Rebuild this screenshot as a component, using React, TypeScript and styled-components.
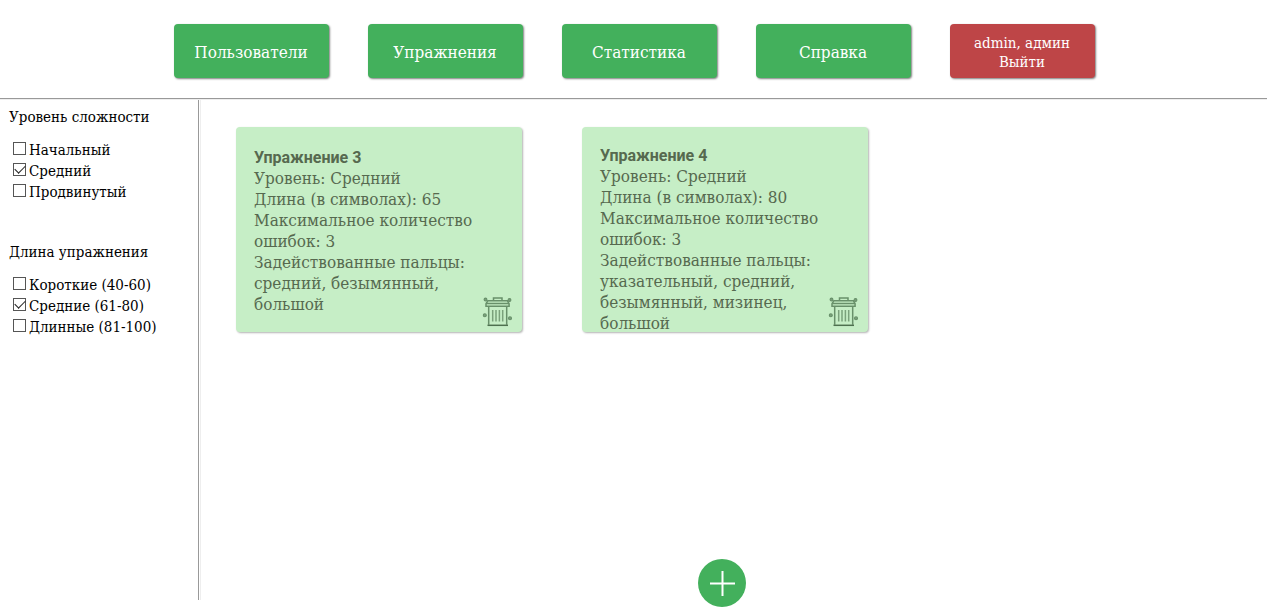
import React, { useState } from "react";
import styled, { createGlobalStyle } from "styled-components";

const slab = '"Roboto Slab", "DejaVu Serif Condensed", "DejaVu Serif", serif';

const GlobalStyle = createGlobalStyle`
  * { box-sizing: border-box; }
  body {
    margin: 0;
    background: #fff;
    color: #000;
    font-family: ${slab};
    font-size: 15px;
    line-height: 21px;
  }
`;

const Header = styled.header`
  padding: 24px 0 20px;
  border-bottom: 1px solid #999;
  box-shadow: 0 1px #eee;
`;

const Nav = styled.nav`
  display: flex;
  justify-content: center;
  gap: 39px;
  padding-left: 1px;
`;

const NavButton = styled.button<{ $exit?: boolean }>`
  width: ${(p) => (p.$exit ? 145 : 155)}px;
  height: 54px;
  padding: ${(p) => (p.$exit ? 4 : 2)}px 0 0;
  border: 0;
  border-radius: 4px;
  background: ${(p) => (p.$exit ? "#be4547" : "#43b05c")};
  box-shadow: 1px 1px 2px rgba(0, 0, 0, 0.5);
  color: #fff;
  font-family: inherit;
  font-size: ${(p) => (p.$exit ? 15 : 17)}px;
  line-height: 19px;
  cursor: pointer;
`;

const Line = styled.span`
  display: block;
`;

const Body = styled.div`
  display: flex;
  align-items: flex-start;
`;

const Sidebar = styled.aside`
  flex: 0 0 201px;
  height: calc(100vh - 114px);
  margin-top: 1px;
  padding: 7px 9px;
  border-right: 1px solid #eee;
  box-shadow: inset -1px 0 #fff, inset -2px 0 #999;
`;

const FilterGroup = styled.fieldset`
  margin: 0 0 39px;
  padding: 0;
  border: 0;
`;

const FilterTitle = styled.legend`
  margin-bottom: 12px;
  padding: 0;
`;

const Option = styled.label`
  display: flex;
  gap: 3px;
  padding-left: 4px;
`;

const Box = styled.input`
  appearance: none;
  width: 13px;
  height: 13px;
  margin: 2px 0 0;
  border: 1px solid #555;
  background: #fff;
  display: grid;
  &:checked::after {
    content: "";
    width: 9px;
    height: 5px;
    margin: 2px 1px;
    border: solid #222;
    border-width: 0 0 1px 1px;
    transform: translateY(-1px) rotate(-45deg);
  }
`;

const Main = styled.main`
  flex: 1;
  display: flex;
  flex-wrap: wrap;
  gap: 28px 60px;
  padding: 28px 35px;
`;

const Card = styled.article`
  position: relative;
  display: grid;
  align-content: safe center;
  width: 286px;
  height: 205px;
  padding: 18px 17px 16px 18px;
  border-radius: 4px;
  background: #c6eec6;
  box-shadow: 1px 1px 2px rgba(0, 0, 0, 0.3);
  color: #56694f;
  font-size: 17px;
`;

const CardTitle = styled.h2`
  margin: 0;
  font: bold 16px/21px Roboto, sans-serif;
`;

const CardText = styled.p`
  margin: 0;
`;

const DeleteButton = styled.button`
  position: absolute;
  right: 9px;
  bottom: 4px;
  width: 32px;
  height: 32px;
  padding: 0;
  border: 0;
  background: none;
  cursor: pointer;
`;

const AddButton = styled.button`
  position: fixed;
  left: 57%;
  bottom: 7px;
  width: 48px;
  height: 48px;
  margin-left: -24px;
  padding: 0;
  border: 0;
  border-radius: 50%;
  background: #43b05c;
  cursor: pointer;
`;

function TrashIcon() {
  return (
    <svg width="32" height="32" viewBox="0 0 32 32" fill="none" stroke="#68906a" strokeWidth="1.5">
      <path d="M12.5 4.8V2h8.5v2.8M6.8 4.8h19.7l1.6 3v2.4H5V7.8z" />
      <path d="M5 7.6h23M7.7 10.2v18.6M25.7 10.2v18.6" />
      <path d="M11.7 14v11.5M15 14v11.5M18.4 14v11.5M21.7 14v11.5" strokeWidth="1.5" stroke="#7aa17b" />
      <path d="M6.5 29.3h20.5" stroke="#4e704f" />
      <g fill="#7aa17b" strokeWidth="1.1">
        <circle cx="4.5" cy="3.5" r="1.4" />
        <circle cx="28.5" cy="4" r="1.4" />
        <circle cx="3.8" cy="19.2" r="1.5" />
        <circle cx="29" cy="22.2" r="1.5" />
      </g>
    </svg>
  );
}

const navItems = ["Пользователи", "Упражнения", "Статистика", "Справка"];

const filters = [
  { title: "Уровень сложности", options: ["Начальный", "Средний", "Продвинутый"] },
  { title: "Длина упражнения", options: ["Короткие (40-60)", "Средние (61-80)", "Длинные (81-100)"] },
];

const exercises = [
  { id: 3, level: "Средний", length: 65, errors: 3, fingers: "средний, безымянный, большой" },
  { id: 4, level: "Средний", length: 80, errors: 3, fingers: "указательный, средний, безымянный, мизинец, большой" },
];

export default function App() {
  const [checked, setChecked] = useState<string[]>(["Средний", "Средние (61-80)"]);
  const toggle = (name: string) =>
    setChecked((c) => (c.includes(name) ? c.filter((n) => n !== name) : [...c, name]));

  return (
    <>
      <GlobalStyle />
      <Header>
        <Nav>
          {navItems.map((item) => (
            <NavButton key={item}>{item}</NavButton>
          ))}
          <NavButton $exit>
            <Line>admin, админ</Line>
            <Line>Выйти</Line>
          </NavButton>
        </Nav>
      </Header>
      <Body>
        <Sidebar>
          {filters.map((group) => (
            <FilterGroup key={group.title}>
              <FilterTitle>{group.title}</FilterTitle>
              {group.options.map((name) => (
                <Option key={name}>
                  <Box type="checkbox" checked={checked.includes(name)} onChange={() => toggle(name)} />
                  {name}
                </Option>
              ))}
            </FilterGroup>
          ))}
        </Sidebar>
        <Main>
          {exercises.map((e) => (
            <Card key={e.id}>
              <CardTitle>{`Упражнение ${e.id}`}</CardTitle>
              <CardText>{`Уровень: ${e.level}`}</CardText>
              <CardText>{`Длина (в символах): ${e.length}`}</CardText>
              <CardText>{`Максимальное количество ошибок: ${e.errors}`}</CardText>
              <CardText>{`Задействованные пальцы: ${e.fingers}`}</CardText>
              <DeleteButton aria-label="Удалить">
                <TrashIcon />
              </DeleteButton>
            </Card>
          ))}
        </Main>
      </Body>
      <AddButton aria-label="Добавить">
        <svg width="48" height="48" viewBox="0 0 48 48" stroke="#fff" strokeWidth="2">
          <path d="M24.5 12v25M12 24.5h25" />
        </svg>
      </AddButton>
    </>
  );
}
